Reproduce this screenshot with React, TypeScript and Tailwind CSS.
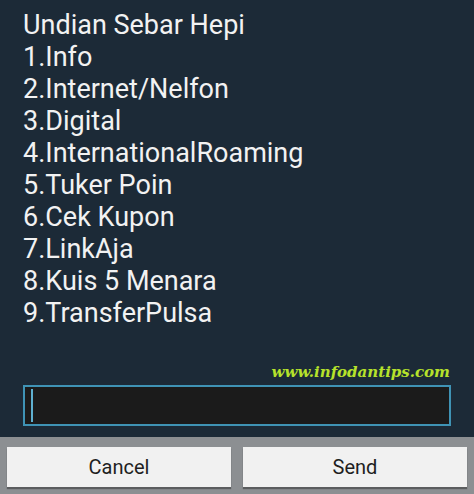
export default function App() {
  const lines = [
    "Undian Sebar Hepi",
    "1.Info",
    "2.Internet/Nelfon",
    "3.Digital",
    "4.InternationalRoaming",
    "5.Tuker Poin",
    "6.Cek Kupon",
    "7.LinkAja",
    "8.Kuis 5 Menara",
    "9.TransferPulsa",
  ]

  return (
    <div className="flex h-[494px] w-[474px] flex-col overflow-hidden bg-[#1c2a37] font-['Roboto',sans-serif]">
      {/* Message */}
      <div className="flex flex-1 flex-col px-[23px] pt-[9px]">
        {lines.map((line) => (
          <div key={line} className="h-[32px] text-[27px] leading-[32px] text-[#f2f2f2]">
            {line}
          </div>
        ))}
        <div className="mt-auto flex justify-end pr-[1px] font-['DejaVu_Serif',serif] text-[15px] font-bold italic leading-[20px] text-[#b6e22b]">
          www.infodantips.com
        </div>
        {/* Input */}
        <div className="mb-[11px] mt-[3px] flex h-[41px] items-stretch border-2 border-[#3f93b5] bg-[#1b1b1b] py-[2px] pl-[6px]">
          <div className="w-[2px] bg-[#5fb0d0]" />
        </div>
      </div>

      {/* Buttons */}
      <div className="flex h-[57px] gap-[12px] bg-[#8c8f92] px-[7px] pt-[10px] pb-[7px]">
        <button className="flex-1 bg-[#f1f1f1] text-[20px] text-[#1f1f1f] shadow-[0_2px_1px_rgba(0,0,0,0.35)]">
          Cancel
        </button>
        <button className="flex-1 bg-[#f1f1f1] text-[20px] text-[#1f1f1f] shadow-[0_2px_1px_rgba(0,0,0,0.35)]">
          Send
        </button>
      </div>
    </div>
  )
}
